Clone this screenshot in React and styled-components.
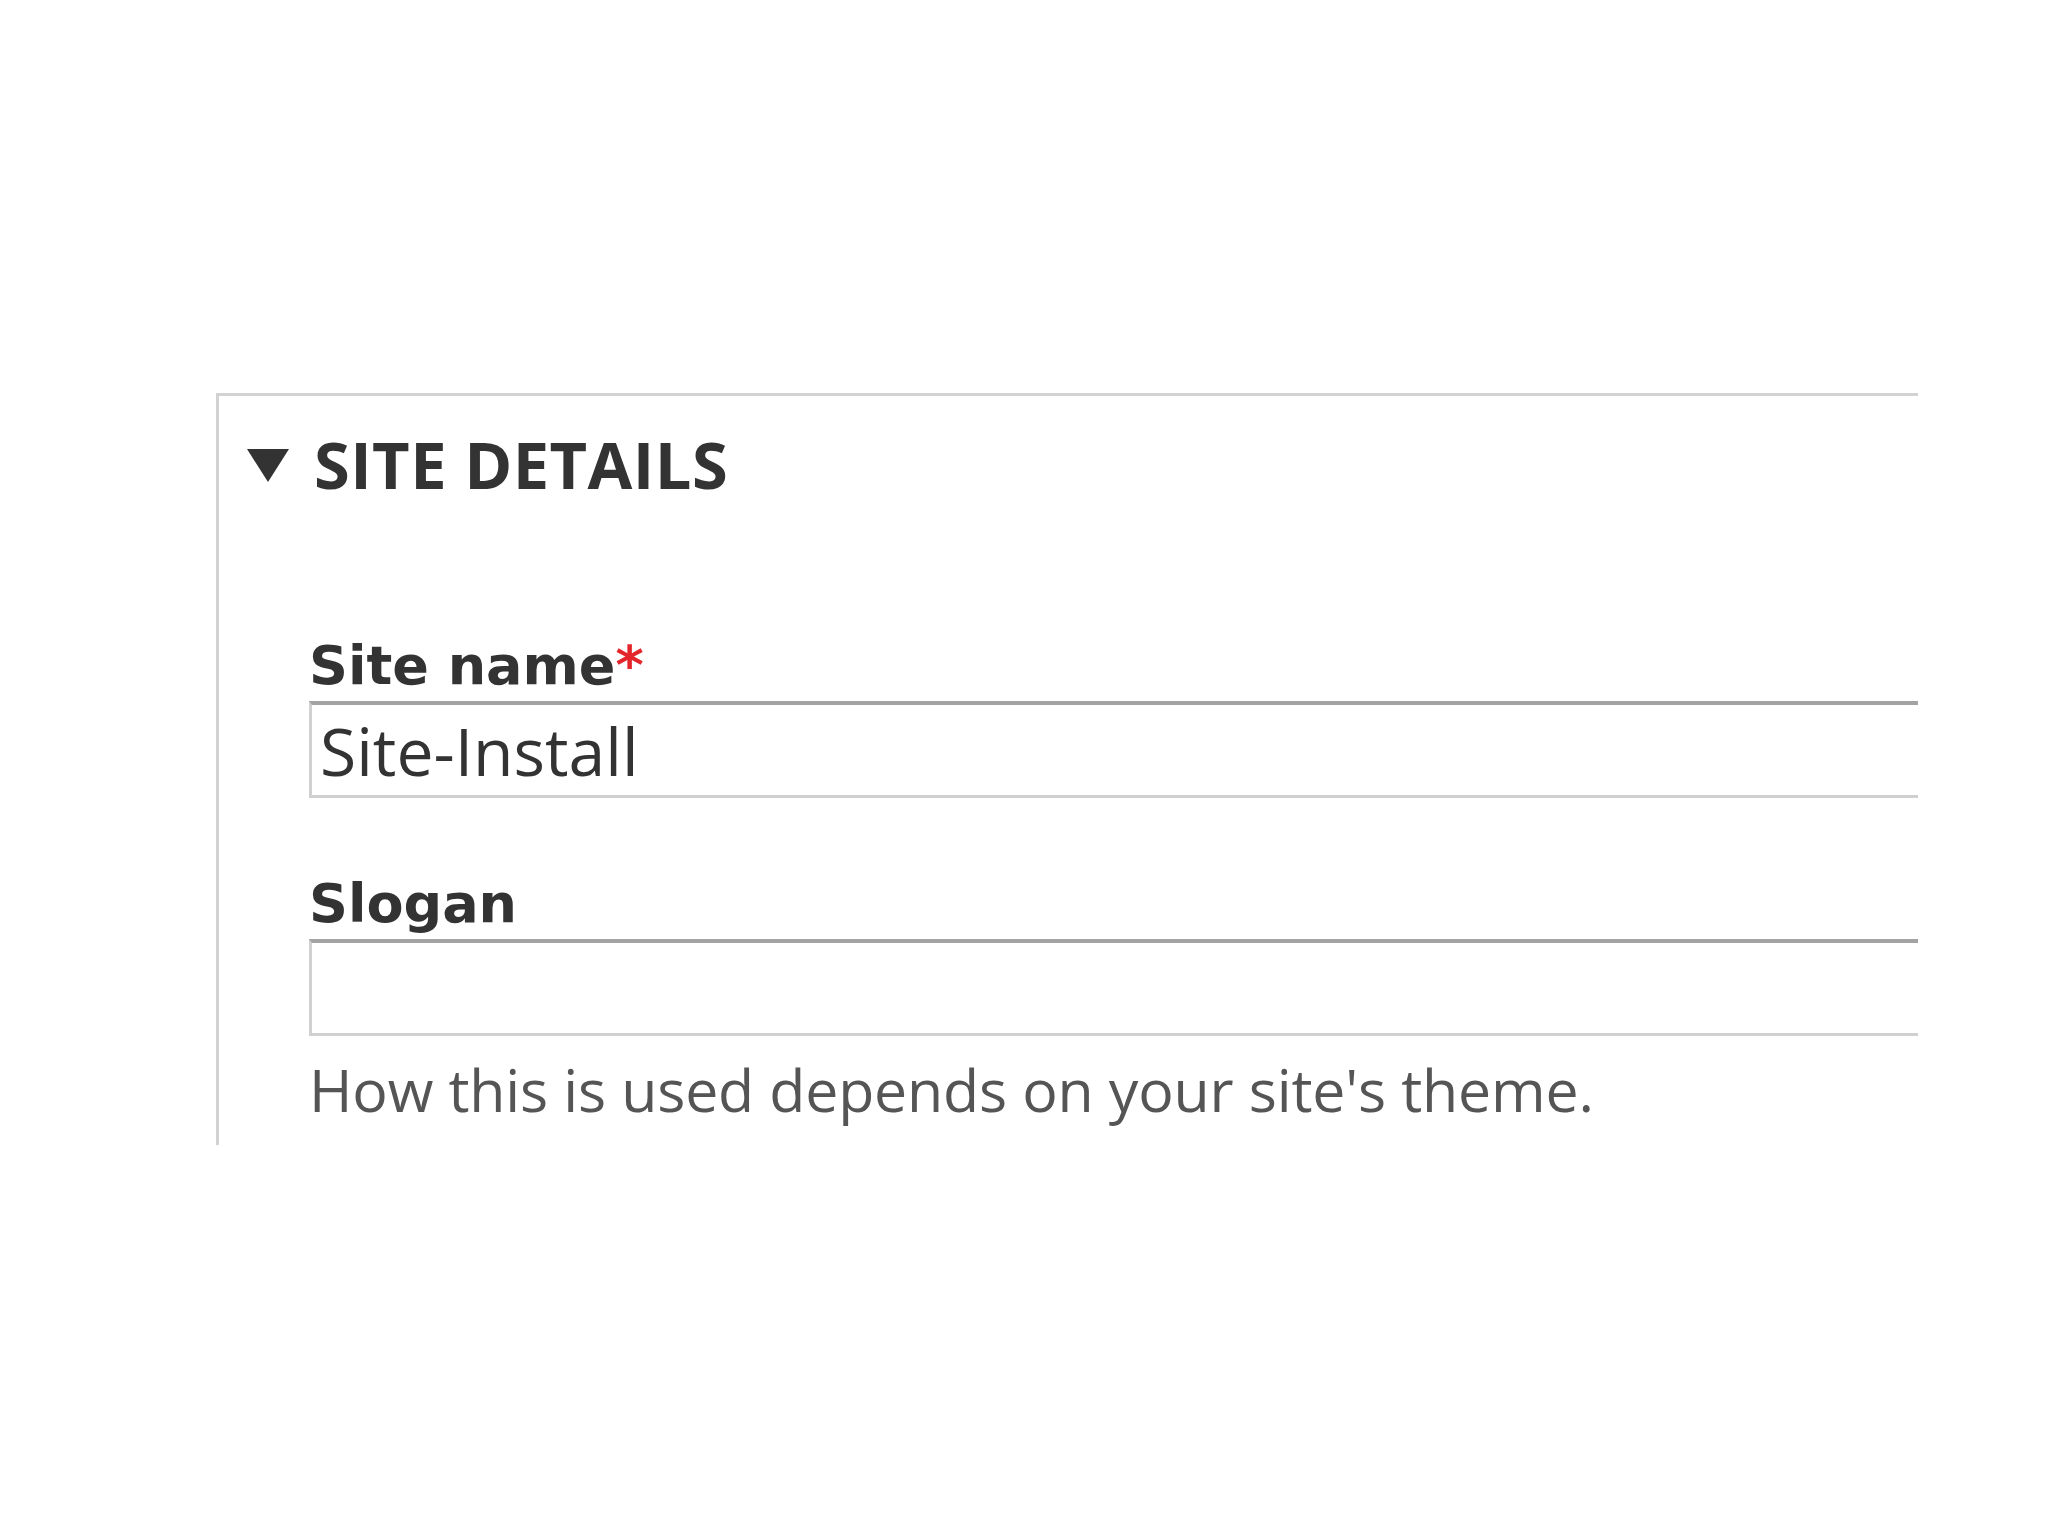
import React from "react";
import styled, { createGlobalStyle } from "styled-components";

const Global = createGlobalStyle`
  html, body { margin: 0; padding: 0; background: #ffffff; }
  body { font-family: "Open Sans", "DejaVu Sans", sans-serif; color: #333; }
`;

const Page = styled.div`
  width: 2048px;
  height: 1536px;
  padding: 393px 0 0 216px;
  box-sizing: border-box;
  background: #ffffff;
`;

const Crop = styled.div`
  width: 1702px;
  height: 752px;
  overflow: hidden;
`;

const Fieldset = styled.section`
  box-sizing: border-box;
  width: 2100px;
  min-height: 1000px;
  border-top: 3px solid #d2d2d2;
  border-left: 3px solid #d2d2d2;
  padding: 36px 0 0 0;
`;

const Legend = styled.div`
  display: flex;
  align-items: center;
  gap: 25px;
  padding-left: 28px;
  height: 64px;
`;

const Arrow = styled.svg`
  width: 42px;
  height: 33px;
  flex: none;
  margin-top: 2px;
`;

const LegendText = styled.span`
  font-family: "Open Sans", sans-serif;
  font-weight: 700;
  font-size: 65px;
  line-height: 64px;
  letter-spacing: 0.4px;
  color: #333;
  text-transform: uppercase;
`;

const Body = styled.div`
  padding-left: 90px;
`;

const FormItem = styled.div`
  margin-top: ${(p) => p.$top}px;
`;

const Label = styled.label`
  display: block;
  font-family: "DejaVu Sans", sans-serif;
  font-weight: 700;
  font-size: 54px;
  line-height: 54px;
  color: #333;
  margin-bottom: 8px;
`;

const Required = styled.span`
  color: #e3262b;
`;

const TextInput = styled.input`
  display: block;
  box-sizing: border-box;
  width: 2000px;
  height: 97px;
  margin: 0;
  padding: 0 0 0 8px;
  border: 3px solid #d0d0d0;
  border-top: 4px solid #a3a3a3;
  border-radius: 0;
  background: #fff;
  font-family: "Open Sans", sans-serif;
  font-size: 66px;
  color: #333;
  outline: none;
`;

const Description = styled.div`
  margin-top: 23px;
  font-family: "Open Sans", sans-serif;
  font-size: 59px;
  line-height: 60px;
  letter-spacing: -0.15px;
  color: #555;
`;

export default function App() {
  return (
    <>
      <Global />
      <Page>
        <Crop>
          <Fieldset>
            <Legend>
              <Arrow viewBox="0 0 42 33">
                <polygon points="0,0 42,0 21,33" fill="#333" />
              </Arrow>
              <LegendText>Site details</LegendText>
            </Legend>
            <Body>
              <FormItem $top={143}>
                <Label htmlFor="site-name">
                  Site name<Required>*</Required>
                </Label>
                <TextInput id="site-name" type="text" defaultValue="Site-Install" />
              </FormItem>
              <FormItem $top={79}>
                <Label htmlFor="slogan">Slogan</Label>
                <TextInput id="slogan" type="text" defaultValue="" />
              </FormItem>
              <Description>How this is used depends on your site's theme.</Description>
            </Body>
          </Fieldset>
        </Crop>
      </Page>
    </>
  );
}
